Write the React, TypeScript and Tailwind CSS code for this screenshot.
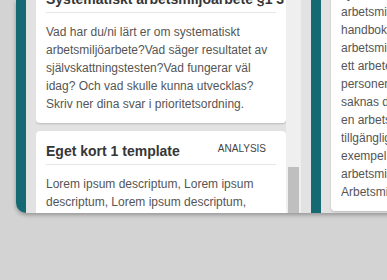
import React from 'react';

const font = { fontFamily: '"Liberation Sans", Arial, sans-serif' };

function Card({
  title,
  tag,
  children,
  className = '',
}: {
  title: string;
  tag?: string;
  children: React.ReactNode;
  className?: string;
}) {
  return (
    <div className={`bg-white rounded-[4px] shadow-[0_1px_2px_rgba(0,0,0,0.18)] px-[10px] pt-[10px] pb-[10px] ${className}`}>
      <div className="flex items-center justify-between pb-[3px] border-b border-[#e6e6e6]">
        <h3 className="text-[14px] leading-[20px] font-bold text-[#363636] whitespace-nowrap">{title}</h3>
        {tag && (
          <span className="text-[10px] leading-[14px] text-[#444] mr-[10px] -mt-[5px]">{tag}</span>
        )}
      </div>
      <p className="mt-[10px] text-[12px] leading-[18px] text-[#555]">{children}</p>
    </div>
  );
}

export default function App() {
  return (
    <div style={font} className="w-[387px] h-[280px] bg-[#d3d3d3] overflow-hidden">
      <div className="ml-[16px] w-[420px] h-[213px] flex rounded-bl-[10px] overflow-hidden bg-[#e2e2e2] shadow-[0_2px_4px_rgba(0,0,0,0.3)]">
        {/* column 1 */}
        <div className="flex w-[295px] shrink-0">
          <div className="w-[10px] bg-[#146973] shrink-0" />
          <div className="flex px-[10px]">
            <div className="w-[250px] overflow-hidden">
              <div className="-mt-[21px] flex flex-col gap-[8px]">
                <Card title="Systematiskt arbetsmiljöarbete §1 3">
                  Vad har du/ni lärt er om systematiskt arbetsmiljöarbete?Vad säger resultatet av självskattningstesten?Vad fungerar väl idag? Och vad skulle kunna utvecklas? Skriv ner dina svar i prioritetsordning.
                </Card>
                <Card title="Eget kort 1 template" tag="ANALYSIS">
                  Lorem ipsum descriptum, Lorem ipsum descriptum, Lorem ipsum descriptum, Lorem ipsum descriptum, Lorem ipsum descriptum.
                </Card>
              </div>
            </div>
            <div className="w-[15px] bg-[#efefef] flex flex-col">
              <div className="mt-[167px] mx-[2px] h-[80px] bg-[#bfbfbf]" />
            </div>
          </div>
        </div>
        {/* column 2 */}
        <div className="flex w-[295px] shrink-0">
          <div className="w-[10px] bg-[#146973] shrink-0" />
          <div className="px-[10px] h-[213px] overflow-hidden">
            <div className="w-[250px] -mt-[43px] bg-white rounded-[4px] shadow-[0_1px_2px_rgba(0,0,0,0.18)] px-[10px] pt-[10px] pb-[10px]">
              <p className="text-[12px] leading-[18px] text-[#555] whitespace-nowrap">
                Kortet beskriver hur man arbetar med<br />
                systematiskt arbetsmiljöarbete i praktiken.<br />
                arbetsmiljöarbetet ska vara en del av<br />
                handboken och beskriva hur det går till.<br />
                arbetsmiljöpolicyn ska finnas i skrift.<br />
                ett arbete som alla i verksamheten gör.<br />
                personer med ansvar ska ha kunskap.<br />
                saknas det kunskap ska den tillföras.<br />
                en arbetsmiljöplan ska göras årligen.<br />
                tillgänglig för alla medarbetare, till<br />
                exempel på intranätet eller i pärmen.<br />
                arbetsmiljöverket har mer information.<br />
                Arbetsmiljölagen gäller alla arbetsplatser.
              </p>
            </div>
          </div>
        </div>
      </div>
    </div>
  );
}
